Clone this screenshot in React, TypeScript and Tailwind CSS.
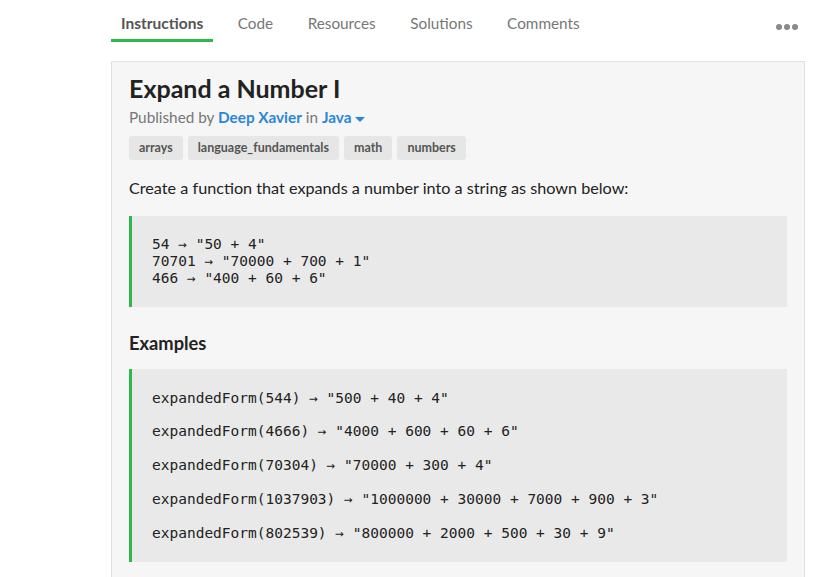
import React from "react";

const tabs = ["Instructions", "Code", "Resources", "Solutions", "Comments"];
const tags = ["arrays", "language_fundamentals", "math", "numbers"];
const examples = [
  'expandedForm(544) → "500 + 40 + 4"',
  'expandedForm(4666) → "4000 + 600 + 60 + 6"',
  'expandedForm(70304) → "70000 + 300 + 4"',
  'expandedForm(1037903) → "1000000 + 30000 + 7000 + 900 + 3"',
  'expandedForm(802539) → "800000 + 2000 + 500 + 30 + 9"',
];

export default function App() {
  return (
    <div
      className="w-[826px] h-[577px] overflow-hidden bg-white"
      style={{ fontFamily: "Lato, 'Open Sans', sans-serif" }}
    >
      <div className="ml-[111px] w-[694px]">
        <div className="flex items-start h-[42px] relative">
          <div className="flex gap-[14.5px]">
            {tabs.map((t, i) => (
              <div
                key={t}
                className={
                  i === 0
                    ? "px-[10px] pt-[12px] h-[42px] text-[15.5px] leading-[22px] font-bold text-[#555] border-b-[3px] border-[#2eb84b]"
                    : "px-[10px] pt-[12px] h-[42px] text-[15.3px] leading-[22px] text-[#777]"
                }
              >
                {t}
              </div>
            ))}
          </div>
          <div className="absolute right-[7px] top-[24px] flex gap-[2px]">
            <span className="block w-[6px] h-[6px] rounded-full bg-[#8a8a8a]" />
            <span className="block w-[6px] h-[6px] rounded-full bg-[#8a8a8a]" />
            <span className="block w-[6px] h-[6px] rounded-full bg-[#8a8a8a]" />
          </div>
        </div>
        <div className="mt-[19px] border border-[#e0e0e0] bg-[#f6f6f6] pl-[17px] pr-[17px] pt-[10px] pb-[40px]">
          <h1 className="text-[25px] leading-[32px] font-bold text-[#222]">Expand a Number I</h1>
          <div className="mt-[2px] text-[15.3px] leading-[22px] text-[#777]">
            Published by <span className="font-bold text-[#2b86d6]">Deep Xavier</span> in{" "}
            <span className="font-bold text-[#2b86d6]">Java</span>
            <span className="inline-block ml-[4px] align-middle w-0 h-0 border-l-[5px] border-r-[5px] border-t-[5px] border-l-transparent border-r-transparent border-t-[#2b86d6]" />
          </div>
          <div className="mt-[8px] flex gap-[5px]">
            {tags.map((t) => (
              <span
                key={t}
                className="h-[24px] px-[10px] rounded-[3px] bg-[#e6e6e6] text-[12.5px] leading-[24px] font-bold text-[#555]"
              >
                {t}
              </span>
            ))}
          </div>
          <p className="mt-[16px] text-[16.2px] leading-[24px] text-[#222]">
            Create a function that expands a number into a string as shown below:
          </p>
          <div
            className="mt-[16px] border-l-[3px] border-[#2eb84b] bg-[#e9e9e9] pl-[20px] pt-[20px] pb-[20px] text-[14.5px] leading-[17px] text-[#222] whitespace-pre"
            style={{ fontFamily: "'DejaVu Sans Mono', monospace" }}
          >
            {'54 → "50 + 4"\n70701 → "70000 + 700 + 1"\n466 → "400 + 60 + 6"'}
          </div>
          <h2 className="mt-[24px] text-[18.3px] leading-[24px] font-bold text-[#222]">Examples</h2>
          <div
            className="mt-[14px] flex flex-col gap-[16.75px] border-l-[3px] border-[#2eb84b] bg-[#e9e9e9] pl-[20px] pt-[20.5px] pb-[20.5px] text-[14.5px] text-[#222]"
            style={{ fontFamily: "'DejaVu Sans Mono', monospace" }}
          >
            {examples.map((e) => (
              <div key={e} className="h-[17px] leading-[17px] whitespace-pre">
                {e}
              </div>
            ))}
          </div>
        </div>
      </div>
    </div>
  );
}
